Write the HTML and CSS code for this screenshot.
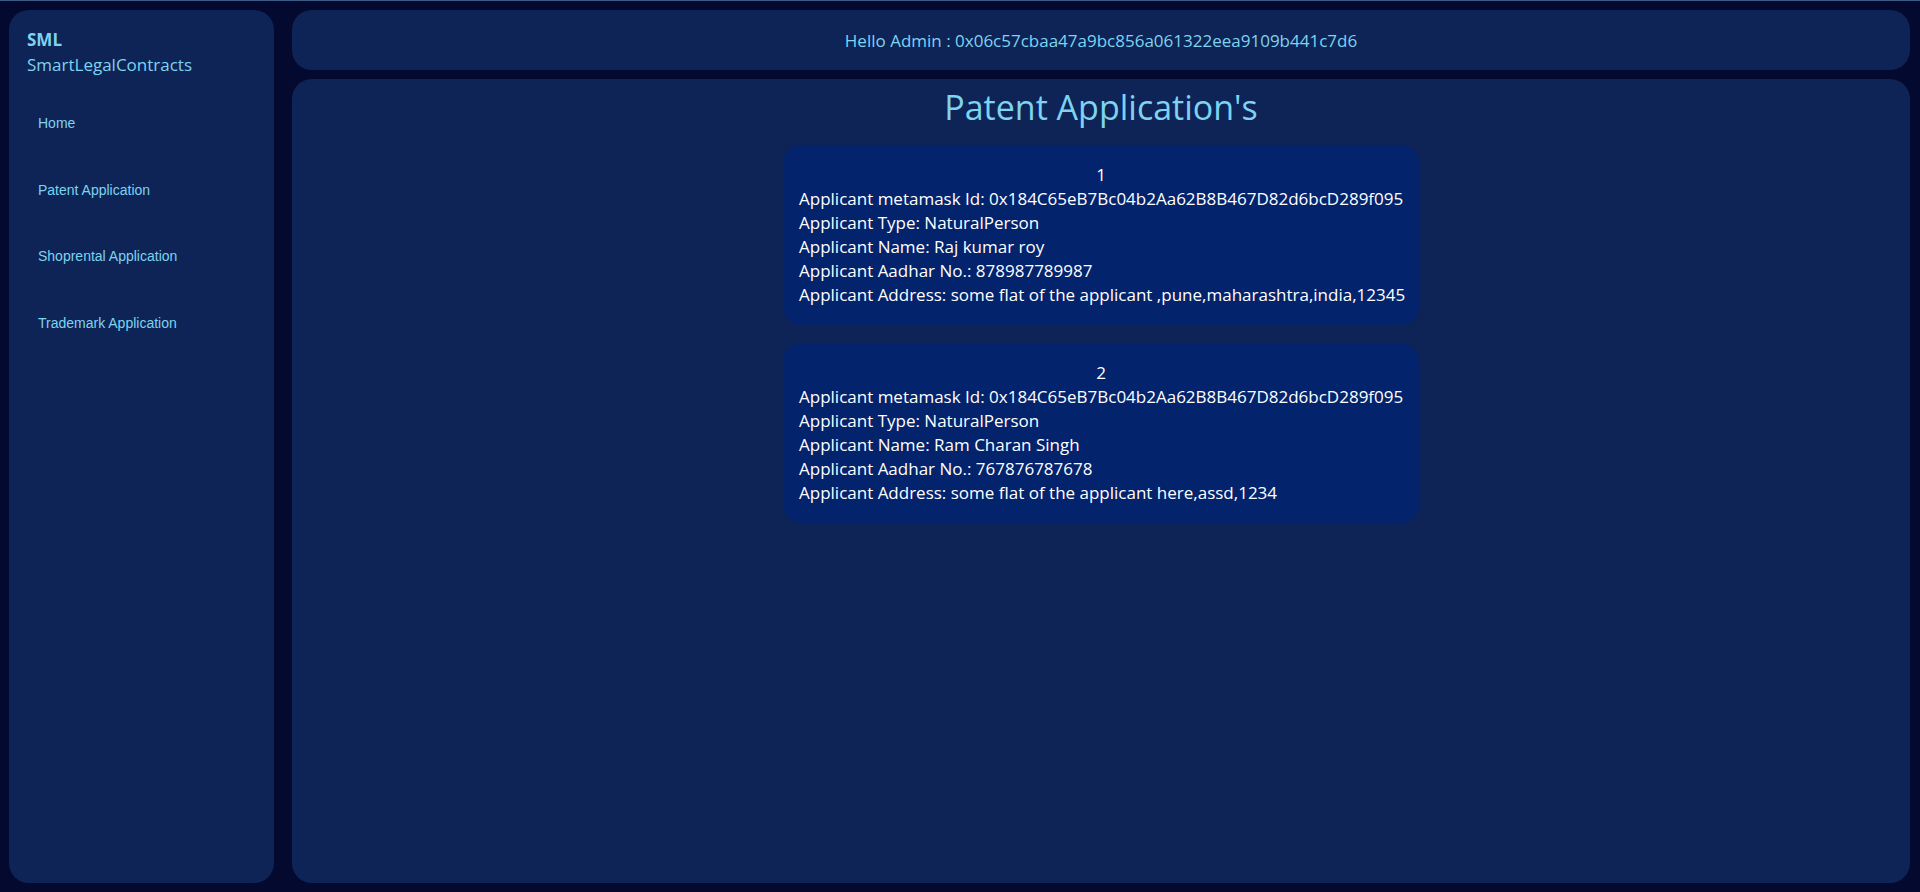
FILE: index.html
```html
<!DOCTYPE html>
<html lang="en">
<head>
<meta charset="utf-8">
<title>SmartLegalContracts</title>
<link rel="stylesheet" href="styles.css">
</head>
<body>
<div class="app">
  <aside class="sidebar">
    <div class="brand">
      <div class="brand-short">SML</div>
      <div class="brand-long">SmartLegalContracts</div>
    </div>
    <nav class="nav">
      <a class="nav-link" href="#">Home</a>
      <a class="nav-link" href="#">Patent Application</a>
      <a class="nav-link" href="#">Shoprental Application</a>
      <a class="nav-link" href="#">Trademark Application</a>
    </nav>
  </aside>
  <div class="content">
    <header class="topbar">Hello Admin : 0x06c57cbaa47a9bc856a061322eea9109b441c7d6</header>
    <main class="main">
      <h1 class="title">Patent Application's</h1>
      <div class="cards">
        <div class="card">
          <div class="card-num">1</div>
          <div class="card-line">Applicant metamask Id: 0x184C65eB7Bc04b2Aa62B8B467D82d6bcD289f095</div>
          <div class="card-line">Applicant Type: NaturalPerson</div>
          <div class="card-line">Applicant Name: Raj kumar roy</div>
          <div class="card-line">Applicant Aadhar No.: 878987789987</div>
          <div class="card-line">Applicant Address: some flat of the applicant ,pune,maharashtra,india,12345</div>
        </div>
        <div class="card">
          <div class="card-num">2</div>
          <div class="card-line">Applicant metamask Id: 0x184C65eB7Bc04b2Aa62B8B467D82d6bcD289f095</div>
          <div class="card-line">Applicant Type: NaturalPerson</div>
          <div class="card-line">Applicant Name: Ram Charan Singh</div>
          <div class="card-line">Applicant Aadhar No.: 767876787678</div>
          <div class="card-line">Applicant Address: some flat of the applicant here,assd,1234</div>
        </div>
      </div>
    </main>
  </div>
</div>
</body>
</html>
```
FILE: styles.css
```css
* { box-sizing: border-box; }
html, body { margin: 0; padding: 0; }
body {
  background: #040a2f;
  border-top: 1px solid #3d5b86;
  font-family: "Open Sans", "Noto Sans", sans-serif;
  height: 892px;
  overflow: hidden;
}
.app {
  display: flex;
  gap: 18px;
  height: 891px;
  padding: 9px 10px 9px 9px;
}
.sidebar {
  width: 265px;
  flex: none;
  background: #0f2456;
  border-radius: 20px;
}
.brand {
  padding: 18px 0 0 18px;
  color: #7dd3f0;
  font-size: 17px;
  line-height: 24.5px;
}
.brand-short { font-weight: 700; }
.nav {
  display: flex;
  flex-direction: column;
  margin-top: 13px;
}
.nav-link {
  display: flex;
  align-items: center;
  height: 66.5px;
  padding-left: 29px;
  font-family: "Liberation Sans", Arial, sans-serif;
  font-size: 14px;
  color: #7dd3f0;
  text-decoration: none;
}
.content {
  flex: 1;
  display: flex;
  flex-direction: column;
  gap: 9px;
  min-width: 0;
}
.topbar {
  height: 60px;
  flex: none;
  background: #0f2456;
  border-radius: 20px;
  display: flex;
  align-items: center;
  justify-content: center;
  color: #7dd3f0;
  font-size: 17px;
}
.main {
  flex: 1;
  background: #0f2456;
  border-radius: 20px;
  display: flex;
  flex-direction: column;
  align-items: center;
}
.title {
  margin: 4px 0 0;
  font-size: 34px;
  font-weight: 400;
  line-height: 48px;
  color: #7dd3f0;
}
.cards {
  display: flex;
  flex-direction: column;
  align-items: center;
  gap: 18px;
  margin-top: 14px;
}
.card {
  width: 636px;
  background: #03236d;
  border-radius: 18px;
  padding: 18px 16px;
  color: #ffffff;
  font-size: 17px;
  line-height: 24px;
}
.card-line { white-space: nowrap; }
.card-num { text-align: center; }
```
